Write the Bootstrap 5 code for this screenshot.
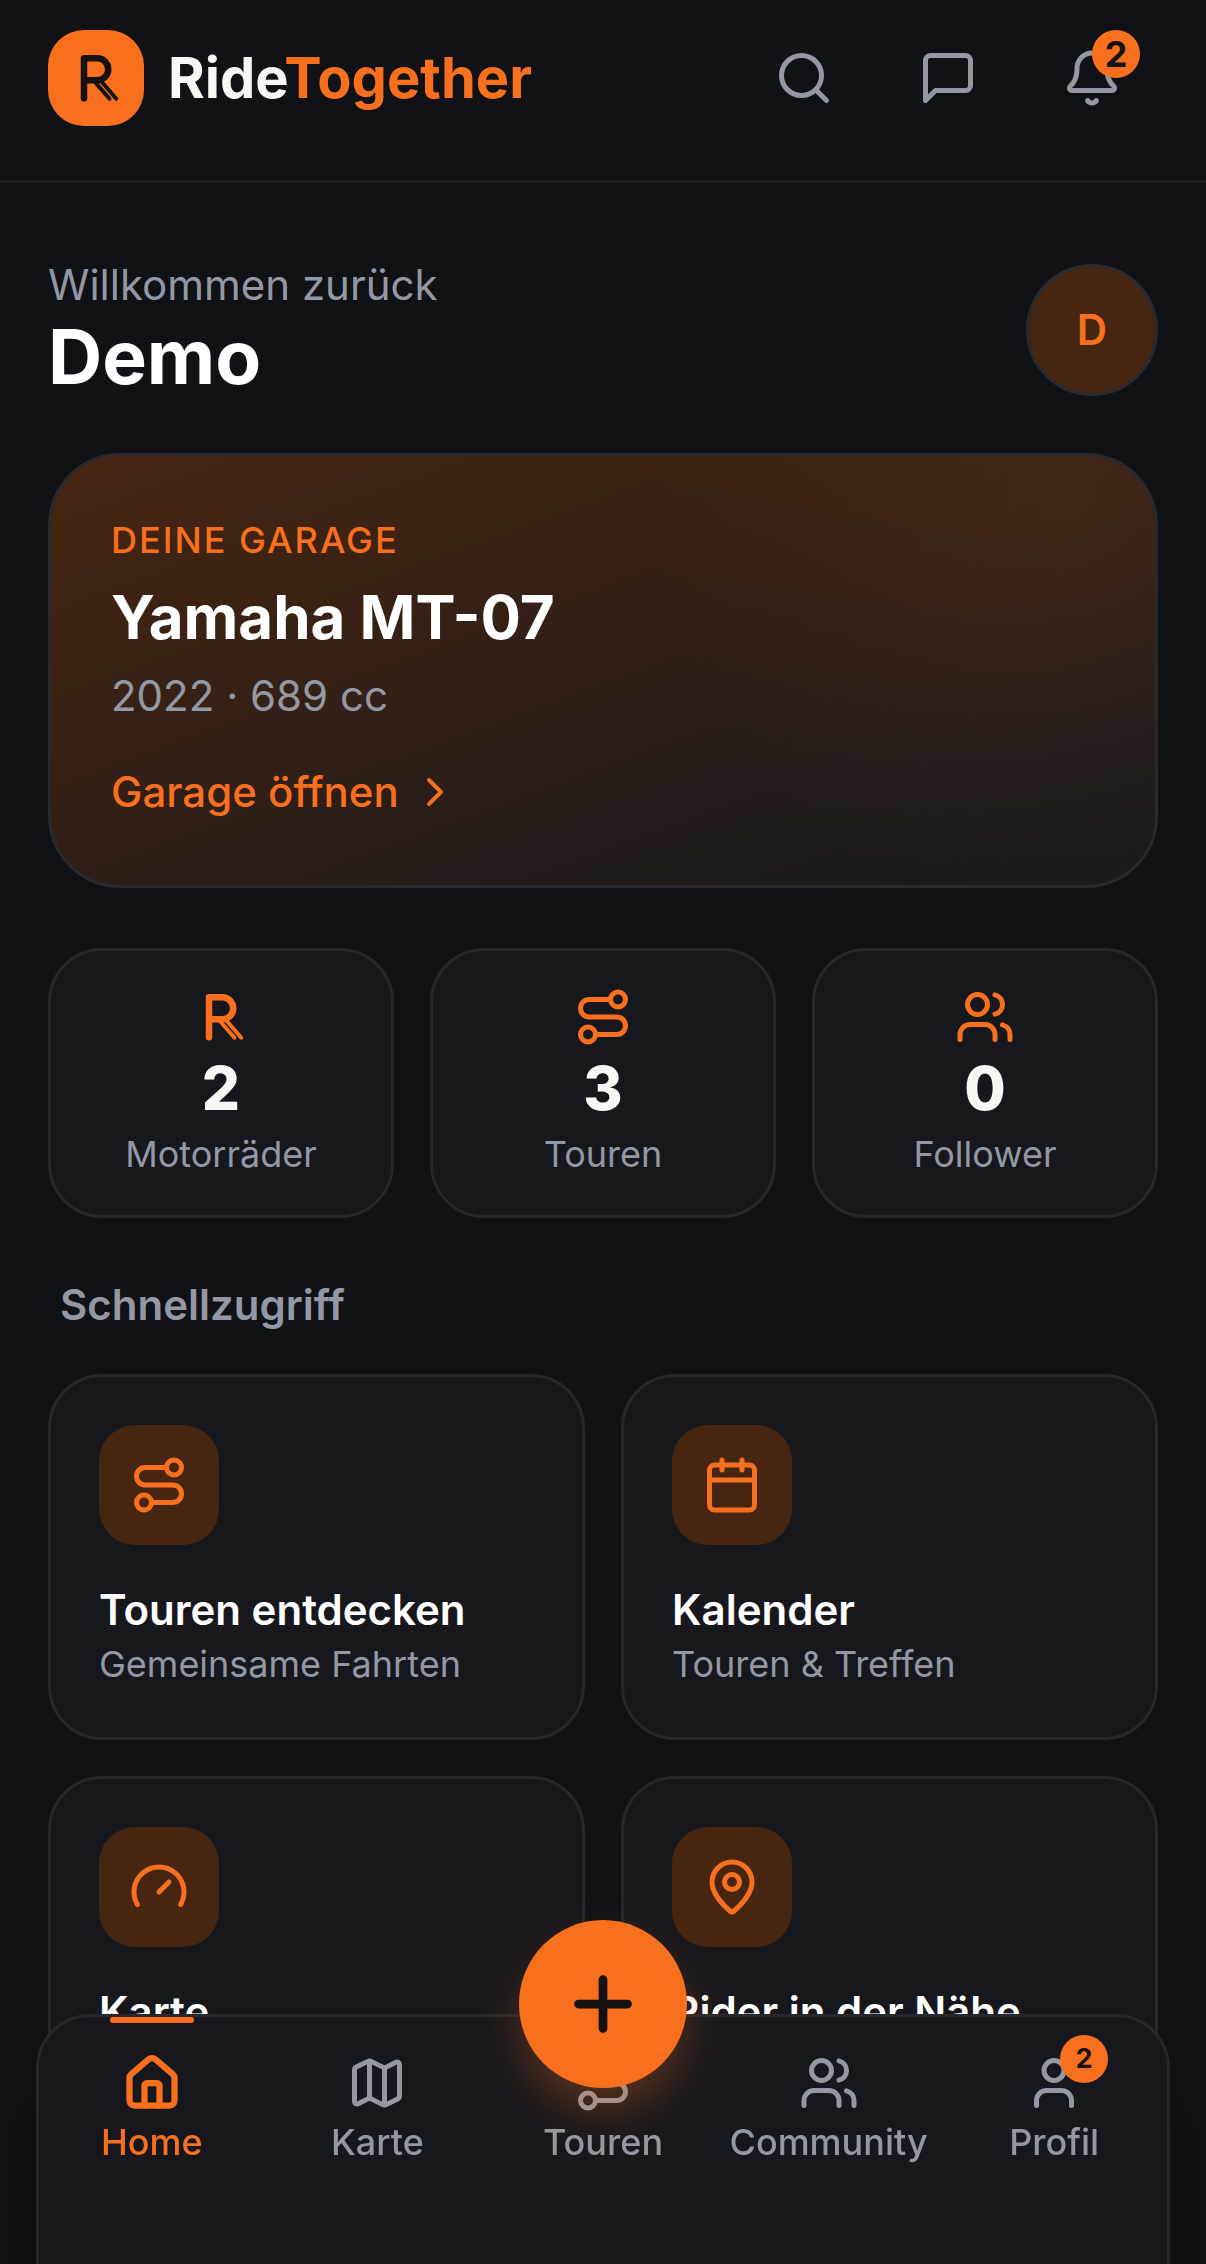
<!DOCTYPE html>
<html lang="de" data-bs-theme="dark">
<head>
<meta charset="utf-8">
<meta name="viewport" content="width=device-width, initial-scale=1">
<title>RideTogether</title>
<link href="https://cdn.jsdelivr.net/npm/bootstrap@5.3.0/dist/css/bootstrap.min.css" rel="stylesheet">
<style>
:root { --rt-bg:#101216; --rt-card:#17181d; --rt-line:#27282d; --rt-orange:#f86f1e; --rt-tint:#472611; --rt-text:#f7f7f5; --rt-muted:#9498a4; }
body { background:var(--rt-bg); color:var(--rt-text); font-family:Inter,"Liberation Sans",sans-serif; font-size:42px; line-height:60px; }
a { color:inherit; text-decoration:none; }
h1,h2,h3,p { margin:0; }
svg { fill:none; stroke:currentColor; stroke-width:2; stroke-linecap:round; stroke-linejoin:round; flex:none; display:block; }
.ico { width:60px; height:60px; }
.accent { color:var(--rt-orange); }
.muted { color:var(--rt-muted); }
.topbar { padding:12px 48px 36px; border-bottom:3px solid #1e2024; }
.logo-box { width:96px; height:96px; border-radius:36px; background:var(--rt-orange); color:#15120f; }
.brand-name { font-size:56px; font-weight:700; margin-left:24px; }
.action-row { gap:12px; }
.icon-btn { width:132px; height:132px; padding:0; border:0; background:none; color:var(--rt-muted); position:relative; }
.count { position:absolute; width:48px; height:48px; border-radius:24px; background:var(--rt-orange); color:#15120f; font-weight:700; line-height:48px; text-align:center; }
.icon-btn .count { top:18px; right:18px; font-size:36px; }
.page { padding:75px 48px 72px; }
.welcome { line-height:54px; }
.user-name { font-size:75px; line-height:90px; font-weight:700; }
.avatar { width:132px; height:132px; border-radius:50%; border:3px solid #2b2a30; background:var(--rt-tint); font-weight:600; }
.garage { margin-top:51px; padding:60px; border:3px solid #2a292e; border-radius:72px;
  background:radial-gradient(circle at 92% 12%, rgba(249,112,32,.09), rgba(249,112,32,0) 420px), linear-gradient(160deg,#482611 0%,#332016 42%,#1a1a1d 90%); background-origin:border-box; }
.eyebrow { font-size:36px; line-height:48px; font-weight:500; letter-spacing:2px; }
.bike { font-size:60px; line-height:76px; font-weight:700; margin-top:15px; }
.specs { line-height:58px; margin-top:12px; }
.garage-link { line-height:66px; margin-top:34px; font-weight:500; gap:12px; }
.garage-link svg { width:48px; height:48px; }
.tile-grid { display:grid; gap:36px; }
.thirds { grid-template-columns:repeat(3,1fr); margin-top:60px; }
.halves { grid-template-columns:repeat(2,1fr); }
.tile { background:var(--rt-card); border:3px solid var(--rt-line); border-radius:54px; }
.stat { padding:36px; }
.stat-num { font-size:60px; line-height:82px; font-weight:800; }
.caption-text { font-size:36px; line-height:50px; color:var(--rt-muted); }
.section-title { font-size:42px; line-height:60px; font-weight:600; margin:57px 12px 39px; }
.quick { padding:48px; }
.quick-icon { width:120px; height:120px; border-radius:36px; background:var(--rt-tint); margin-bottom:36px; }
.quick-title { font-size:42px; line-height:58px; font-weight:600; }
.dock { position:fixed; left:36px; right:36px; bottom:0; height:250px; background:var(--rt-card); border:3px solid var(--rt-line); border-bottom:0; border-radius:54px 54px 0 0; box-shadow:0 72px 60px rgba(0,0,0,.35); }
.dock-item { flex:1 1 0; min-width:0; padding-top:36px; color:var(--rt-muted); font-size:36px; line-height:54px; font-weight:500; position:relative; }
.dock-item .ico { margin-bottom:2px; }
.dock-item.active { color:var(--rt-orange); }
.dock-item.active svg { stroke-width:2.5; }
.dock-item.active::before { content:""; position:absolute; top:0; width:84px; height:6px; border-radius:3px; background:var(--rt-orange); }
.dock-icon { position:relative; }
.dock-icon .count { left:36px; top:-18px; font-size:27px; }
.fab { position:absolute; left:50%; top:-97px; width:168px; height:168px; margin-left:-84px; border:0; padding:0; border-radius:50%; background:var(--rt-orange); color:#15120f; box-shadow:0 24px 54px -6px rgba(249,112,32,.35); }
.fab svg { width:84px; height:84px; stroke-width:2.5; }
</style>
</head>
<body>
<svg class="d-none" aria-hidden="true">
  <symbol id="i-route" viewBox="0 0 24 24"><circle cx="6" cy="19" r="3"/><path d="M9 19h8.500a3.500 3.500 0 0 0 0-7h-11a3.500 3.500 0 0 1 0-7H15"/><circle cx="18" cy="5" r="3"/></symbol>
  <symbol id="i-users" viewBox="0 0 24 24"><path d="M16 21v-2a4 4 0 0 0-4-4H6a4 4 0 0 0-4 4v2"/><circle cx="9" cy="7" r="4"/><path d="M22 21v-2a4 4 0 0 0-3-3.870"/><path d="M16 3.130a4 4 0 0 1 0 7.750"/></symbol>
  <symbol id="i-ride" viewBox="0 0 24 24"><path stroke-width="2.600" d="M7.200 20.100V4.100h5.300a4.400 4.400 0 0 1 0 8.800H7.200"/><path stroke-width="1.600" d="M11.300 13.300l6.100 7M13.900 13.100l6.200 7.200"/></symbol>
</svg>

<header class="topbar d-flex align-items-center justify-content-between">
  <a href="#" class="d-flex align-items-center">
    <span class="logo-box d-flex align-items-center justify-content-center"><svg class="ico"><use href="#i-ride"/></svg></span>
    <span class="brand-name">Ride<span class="accent">Together</span></span>
  </a>
  <div class="action-row d-flex">
    <button type="button" class="icon-btn d-flex align-items-center justify-content-center" aria-label="Suche"><svg class="ico" viewBox="0 0 24 24"><circle cx="11" cy="11" r="8"/><path d="m21 21-4.300-4.300"/></svg></button>
    <button type="button" class="icon-btn d-flex align-items-center justify-content-center" aria-label="Nachrichten"><svg class="ico" viewBox="0 0 24 24"><path d="M21 15a2 2 0 0 1-2 2H7l-4 4V5a2 2 0 0 1 2-2h14a2 2 0 0 1 2 2z"/></svg></button>
    <button type="button" class="icon-btn d-flex align-items-center justify-content-center" aria-label="Mitteilungen"><svg class="ico" viewBox="0 0 24 24"><path d="M10.268 21a2 2 0 0 0 3.464 0"/><path d="M3.262 15.326A1 1 0 0 0 4 17h16a1 1 0 0 0 .740-1.673C19.410 13.956 18 12.499 18 8A6 6 0 0 0 6 8c0 4.499-1.411 5.956-2.738 7.326"/></svg><span class="count">2</span></button>
  </div>
</header>

<main class="page">
  <div class="d-flex align-items-center justify-content-between">
    <div>
      <p class="welcome muted">Willkommen zurück</p>
      <h1 class="user-name">Demo</h1>
    </div>
    <a href="#" class="avatar accent d-flex align-items-center justify-content-center">D</a>
  </div>

  <section class="garage">
    <p class="eyebrow accent text-uppercase">Deine Garage</p>
    <h2 class="bike">Yamaha MT-07</h2>
    <p class="specs muted">2022 · 689 cc</p>
    <a href="#" class="garage-link accent d-flex align-items-center">Garage öffnen <svg viewBox="0 0 24 24"><path d="m9 18 6-6-6-6"/></svg></a>
  </section>

  <section class="tile-grid thirds">
    <a href="#" class="tile stat d-flex flex-column align-items-center"><svg class="ico accent"><use href="#i-ride"/></svg><span class="stat-num">2</span><span class="caption-text">Motorräder</span></a>
    <a href="#" class="tile stat d-flex flex-column align-items-center"><svg class="ico accent"><use href="#i-route"/></svg><span class="stat-num">3</span><span class="caption-text">Touren</span></a>
    <a href="#" class="tile stat d-flex flex-column align-items-center"><svg class="ico accent"><use href="#i-users"/></svg><span class="stat-num">0</span><span class="caption-text">Follower</span></a>
  </section>

  <h2 class="section-title muted">Schnellzugriff</h2>
  <section class="tile-grid halves">
    <a href="#" class="tile quick">
      <div class="quick-icon accent d-flex align-items-center justify-content-center"><svg class="ico"><use href="#i-route"/></svg></div>
      <h3 class="quick-title">Touren entdecken</h3><p class="caption-text">Gemeinsame Fahrten</p>
    </a>
    <a href="#" class="tile quick">
      <div class="quick-icon accent d-flex align-items-center justify-content-center"><svg class="ico" viewBox="0 0 24 24"><path d="M8 2v4M16 2v4M3 10h18"/><rect width="18" height="18" x="3" y="4" rx="2"/></svg></div>
      <h3 class="quick-title">Kalender</h3><p class="caption-text">Touren &amp; Treffen</p>
    </a>
    <a href="#" class="tile quick">
      <div class="quick-icon accent d-flex align-items-center justify-content-center"><svg class="ico" viewBox="0 0 24 24"><path d="m12 14 4-4"/><path d="M3.340 19a10 10 0 1 1 17.320 0"/></svg></div>
      <h3 class="quick-title">Karte</h3>
    </a>
    <a href="#" class="tile quick">
      <div class="quick-icon accent d-flex align-items-center justify-content-center"><svg class="ico" viewBox="0 0 24 24"><path d="M20 10c0 4.993-5.539 10.193-7.399 11.799a1 1 0 0 1-1.202 0C9.539 20.193 4 14.993 4 10a8 8 0 0 1 16 0"/><circle cx="12" cy="10" r="3"/></svg></div>
      <h3 class="quick-title">Rider in der Nähe</h3>
    </a>
  </section>
</main>

<nav class="dock d-flex">
  <a href="#" class="dock-item active d-flex flex-column align-items-center"><svg class="ico" viewBox="0 0 24 24"><path d="M15 21v-8a1 1 0 0 0-1-1h-4a1 1 0 0 0-1 1v8"/><path d="M3 10a2 2 0 0 1 .709-1.528l7-5.999a2 2 0 0 1 2.582 0l7 5.999A2 2 0 0 1 21 10v9a2 2 0 0 1-2 2H5a2 2 0 0 1-2-2z"/></svg>Home</a>
  <a href="#" class="dock-item d-flex flex-column align-items-center"><svg class="ico" viewBox="0 0 24 24"><path d="M14.106 5.553a2 2 0 0 0 1.788 0l3.659-1.830A1 1 0 0 1 21 4.619v12.764a1 1 0 0 1-.553.894l-4.553 2.277a2 2 0 0 1-1.788 0l-4.212-2.106a2 2 0 0 0-1.788 0l-3.659 1.830A1 1 0 0 1 3 19.381V6.618a1 1 0 0 1 .553-.894l4.553-2.277a2 2 0 0 1 1.788 0zM15 5.764v15M9 3.236v15"/></svg>Karte</a>
  <a href="#" class="dock-item d-flex flex-column align-items-center"><svg class="ico"><use href="#i-route"/></svg>Touren</a>
  <a href="#" class="dock-item d-flex flex-column align-items-center"><svg class="ico"><use href="#i-users"/></svg>Community</a>
  <a href="#" class="dock-item d-flex flex-column align-items-center"><span class="dock-icon"><svg class="ico" viewBox="0 0 24 24"><path d="M19 21v-2a4 4 0 0 0-4-4H9a4 4 0 0 0-4 4v2"/><circle cx="12" cy="7" r="4"/></svg><span class="count">2</span></span>Profil</a>
  <button type="button" class="fab d-flex align-items-center justify-content-center" aria-label="Neu erstellen"><svg viewBox="0 0 24 24"><path d="M5 12h14M12 5v14"/></svg></button>
</nav>
<script src="https://cdn.jsdelivr.net/npm/bootstrap@5.3.0/dist/js/bootstrap.bundle.min.js"></script>
</body>
</html>
